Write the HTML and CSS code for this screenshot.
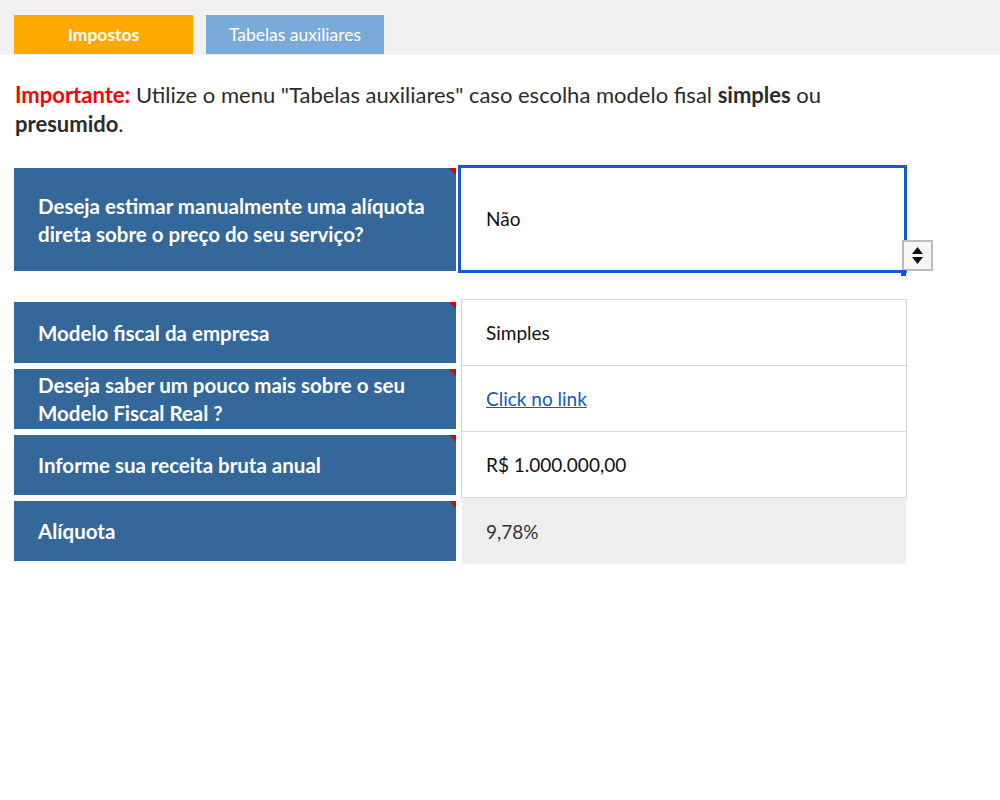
FILE: index.html
```html
<!DOCTYPE html>
<html lang="pt-BR">

<head>
    <meta charset="UTF-8">
    <meta name="viewport" content="width=device-width, initial-scale=1.0">
    <title>Impostos</title>
    <link rel="stylesheet" href="styles.css">
</head>

<body>
    <div class="topbar">
        <div class="tab tab-active">Impostos</div>
        <div class="tab tab-aux">Tabelas auxiliares</div>
    </div>

    <p class="notice">
        <span class="warn">Importante:</span> Utilize o menu "Tabelas auxiliares" caso escolha modelo fisal <b>simples</b> ou
        <b>presumido</b>.
    </p>

    <div class="row row-first">
        <div class="label">Deseja estimar manualmente uma alíquota<br>direta sobre o preço do seu serviço?</div>
        <div class="value value-selected">
            Não
            <div class="spinner">
                <svg width="13" height="19" viewBox="0 0 13 19">
                    <polygon points="6.5,1 12,8 1,8" fill="#111" />
                    <polygon points="1,11 12,11 6.5,18" fill="#111" />
                </svg>
            </div>
            <div class="handle"></div>
        </div>
    </div>

    <div class="group">
        <div class="row">
            <div class="label">Modelo fiscal da empresa</div>
            <div class="value">Simples</div>
        </div>
        <div class="row">
            <div class="label">Deseja saber um pouco mais sobre o seu<br>Modelo Fiscal Real ?</div>
            <div class="value"><a href="#">Click no link</a></div>
        </div>
        <div class="row">
            <div class="label">Informe sua receita bruta anual</div>
            <div class="value">R$ 1.000.000,00</div>
        </div>
        <div class="row">
            <div class="label">Alíquota</div>
            <div class="value value-result">9,78%</div>
        </div>
    </div>
</body>

</html>
```

FILE: styles.css
```css
body {
    margin: 0;
    font-family: Lato, "Open Sans", sans-serif;
    background-color: #ffffff;
    color: #222;
}

.topbar {
    display: flex;
    gap: 13px;
    height: 55px;
    box-sizing: border-box;
    padding: 15px 14px 0;
    background-color: #f1f1f1;
}

.tab {
    height: 39px;
    display: flex;
    align-items: center;
    justify-content: center;
    color: white;
    font-size: 17.5px;
}

.tab-active {
    width: 179px;
    background-color: #ffa800;
    font-weight: bold;
}

.tab-aux {
    width: 178px;
    background-color: #7aaad8;
}

.notice {
    max-width: 830px;
    margin: 25px 0 0;
    padding: 0 15px;
    font-size: 22px;
    line-height: 29px;
    color: #2b2b2b;
}

.notice .warn {
    color: #ff0000;
    font-weight: bold;
}

.row {
    display: flex;
    height: 66px;
    padding-left: 14px;
}

.label {
    position: relative;
    width: 442px;
    box-sizing: border-box;
    margin: 3px 0;
    padding-left: 24px;
    display: flex;
    align-items: center;
    background-color: #34679a;
    color: white;
    font-weight: bold;
    font-size: 20.5px;
    line-height: 28px;
}

.label::after {
    content: "";
    position: absolute;
    top: 0;
    right: 0;
    border-top: 7px solid #e00000;
    border-left: 7px solid transparent;
}

.value {
    width: 446px;
    box-sizing: border-box;
    margin-left: 5px;
    padding-left: 24px;
    display: flex;
    align-items: center;
    font-size: 19px;
    color: #111;
    border: 1px solid #d6d6d6;
    border-top: none;
}

.value a {
    color: #1558c0;
}

.row-first {
    height: 108px;
    margin-top: 27px;
}

.row-first .label {
    margin: 3px 0 2px;
}

.value-selected {
    position: relative;
    width: 449px;
    margin-left: 2px;
    padding-left: 25px;
    border: 3px solid #1558d0;
    padding-bottom: 2px;
}

.spinner {
    position: absolute;
    top: 72px;
    right: -29px;
    width: 27px;
    height: 27px;
    display: flex;
    align-items: center;
    justify-content: center;
    background-color: #f6f6f6;
    border: 2px solid #bdbdbd;
}

.handle {
    position: absolute;
    top: 102px;
    right: -2px;
    width: 5px;
    height: 6px;
    background-color: #1558d0;
}

.group {
    margin-top: 26px;
}

.group .row:first-child .value {
    border-top: 1px solid #d6d6d6;
}

.value-result {
    width: 444px;
    margin-left: 6px;
    border: none;
    background-color: #eceeef;
    color: #333;
}

.group .row:first-child {
    height: 67px;
}
```
